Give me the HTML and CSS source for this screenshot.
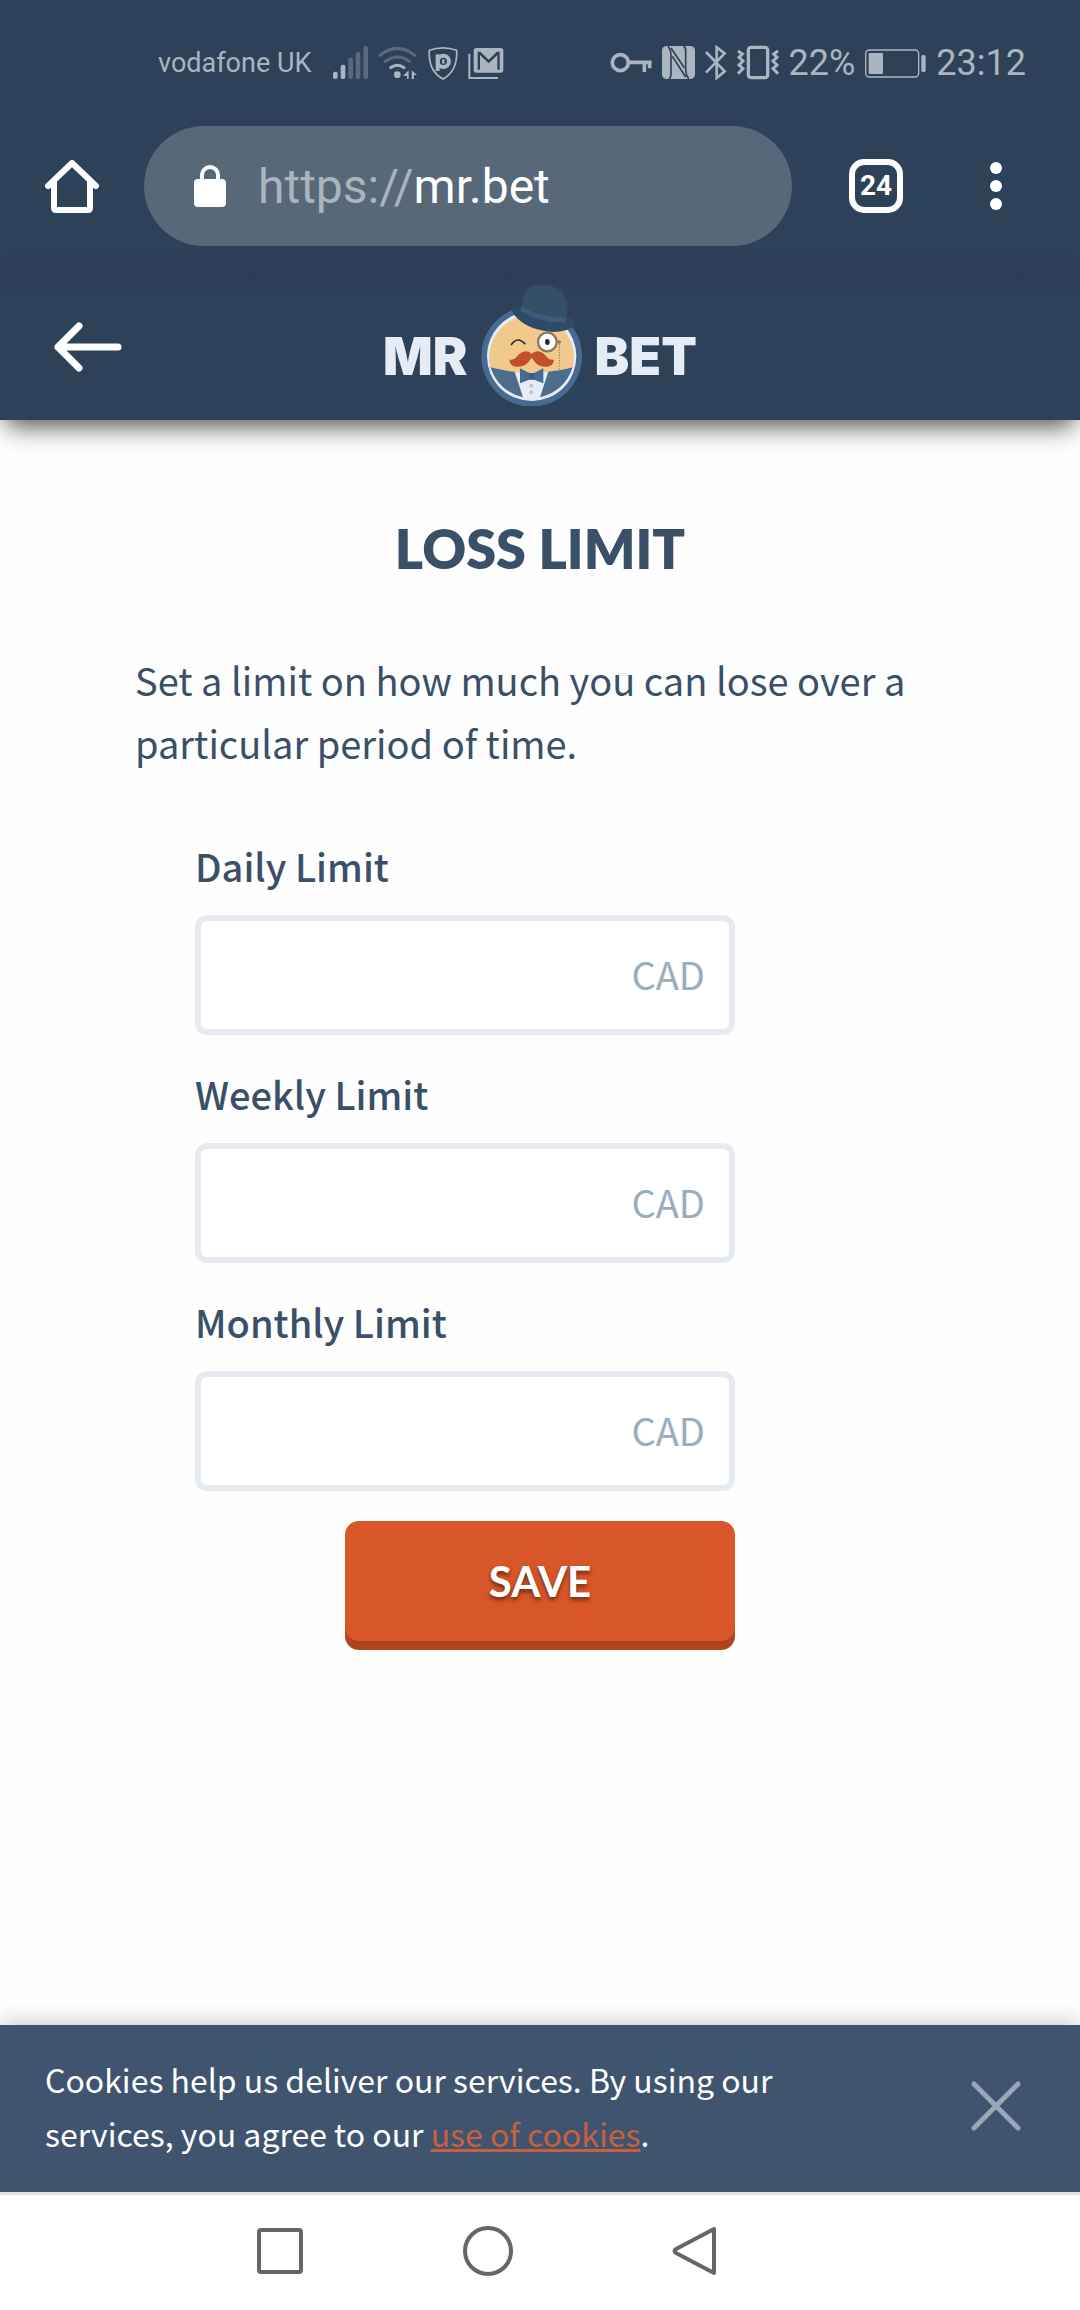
FILE: index.html
```html
<!DOCTYPE html>
<html lang="en">
<head>
<meta charset="utf-8">
<meta name="viewport" content="width=device-width, initial-scale=1">
<title>Loss limit</title>
<link rel="stylesheet" href="styles.css">
</head>
<body>
<div class="browser">
  <div class="status">
    <div class="status-left">
      <span class="carrier">vodafone UK</span>
      <svg width="35" height="36" viewBox="585 42 105 108" fill="currentColor"><rect x="585" y="122" width="14" height="22" rx="6"/><rect x="608" y="101" width="14" height="43" rx="6"/><g opacity=".35"><rect x="631" y="81" width="14" height="63" rx="6"/><rect x="653" y="63" width="14" height="81" rx="6"/><rect x="676" y="45" width="14" height="99" rx="6"/></g></svg>
      <svg width="40" height="36" viewBox="719 42 120 108" fill="none" stroke="currentColor" stroke-width="9" stroke-linecap="round"><g opacity=".35"><path d="M725 73q52-42 104 0M740 92q37-28 74 0"/></g><path d="M757 110q20-15 40 0"/><circle cx="777" cy="131" r="10" fill="currentColor" stroke="none"/><path d="M811 118v26h-5v-9h-12zM820 118l16 14h-9v12h-7z" fill="currentColor" stroke="none"/></svg>
      <svg width="30" height="36" viewBox="871 42 90 108" fill="none" stroke="currentColor" stroke-width="5"><path d="M875 58q41-15 82 0 3 62-41 86-45-24-41-86z"/><path d="M900 70v50" stroke-width="12"/><circle cx="917" cy="91" r="17" stroke-width="12"/><path d="M917 85v13" stroke-width="7"/></svg>
      <svg width="36" height="36" viewBox="998 42 108 108"><path d="M1002 68v73h86" fill="none" stroke="currentColor" stroke-width="6"/><rect x="1015" y="51" width="89" height="74" rx="8" fill="currentColor"/><path d="M1027 62h8l25 24 25-24h8v54h-7V72l-26 25-26-25v44h-7z" fill="#2d4259"/></svg>
    </div>
    <div class="status-right">
      <svg width="42" height="36" viewBox="61 42 126 108" fill="none" stroke="currentColor" stroke-width="11"><circle cx="92" cy="95" r="24"/><path d="M116 94h70M164 94v29M180 94v18"/></svg>
      <svg width="33" height="36" viewBox="222 42 99 108"><rect x="222" y="45" width="99" height="99" rx="14" fill="currentColor"/><path d="M240 45q9 12 9 27v60q0 8-7 12M253 76l40 62M302 144q-9-12-9-27V59q0-9-6-14M289 110L249 51" fill="none" stroke="#2d4259" stroke-width="5"/></svg>
      <svg width="22" height="36" viewBox="356 42 66 108" fill="none" stroke="currentColor" stroke-width="8"><path d="M359 63l56 58-24 20V49l24 18-56 58"/></svg>
      <svg width="42" height="36" viewBox="456 42 126 108" fill="none" stroke="currentColor" stroke-width="9"><rect x="490" y="49" width="58" height="91" rx="8" stroke-width="10"/><path d="M459 60l13 9-10 10 12 11-12 12 12 11-15 15M579 60l-13 9 10 10-12 11 12 12-12 11 15 15"/></svg>
      <span>22%</span>
      <svg width="61" height="36" viewBox="828 42 183 108" fill="none" stroke="currentColor"><rect x="830" y="57" width="159" height="81" rx="11" stroke-width="4"/><rect x="839" y="66" width="43" height="63" rx="4" fill="currentColor" stroke="none"/><rect x="997" y="72" width="13" height="51" rx="5" fill="currentColor" stroke="none"/></svg>
      <span>23:12</span>
    </div>
  </div>
  <div class="toolbar">
    <button class="tool" type="button" aria-label="Home"><svg width="54" height="54" viewBox="0 0 54 54" fill="none" stroke="#fff" stroke-width="6" stroke-linecap="round" stroke-linejoin="round"><path d="M3 27L27 4l24 23M9 23v26q0 2 2 2h32q2 0 2-2V23"/></svg></button>
    <button class="address" type="button">
      <svg width="32" height="42" viewBox="0 0 32 42"><rect y="14" width="32" height="28" rx="4" fill="#fff"/><path d="M8 16V10a8 8 0 0 1 16 0v6" fill="none" stroke="#fff" stroke-width="4"/></svg>
      <span><span class="scheme">https://</span>mr.bet</span>
    </button>
    <button class="tabs" type="button" aria-label="Open tabs">24</button>
    <button class="tool" type="button" aria-label="Menu"><svg width="12" height="48" viewBox="0 0 12 48" fill="#fff"><circle cx="6" cy="6" r="6"/><circle cx="6" cy="24" r="6"/><circle cx="6" cy="42" r="6"/></svg></button>
  </div>
</div>
<header class="site-header">
  <button class="tool back" type="button" aria-label="Back"><svg width="68" height="50" viewBox="0 0 68 50" fill="none" stroke="#fff" stroke-width="7" stroke-linecap="round" stroke-linejoin="round"><path d="M25 4L4 25l21 21M4 25h60"/></svg></button>
  <a class="logo" href="#">
    <span>MR</span>
    <svg width="103" height="122" viewBox="60 40 309 366">
      <circle cx="215" cy="257" r="151" fill="#466a91"/>
      <circle cx="215" cy="257" r="134" fill="#e5ecf5"/>
      <path d="M91 290a127 127 0 1 1 247 0q-60 17-123 17T91 290z" fill="#f1c98d"/>
      <path d="M91 290q45 11 73 13l25 77Q115 362 91 290zM338 290q-45 11-73 13l-25 77q74-18 98-90z" fill="#4c6e8e"/>
      <path d="M180 293l28 14h14l28-14v45l-28-11h-14l-28 11z" fill="#456c91"/>
      <path d="M207 307v19h15v-19z" fill="#3b5f83"/>
      <g fill="#bcc3ce"><circle cx="214" cy="345" r="6"/><circle cx="214" cy="365" r="6"/></g>
      <path d="M153 223q20-29 43-2" fill="none" stroke="#202a34" stroke-width="5"/>
      <circle cx="262" cy="214" r="28" fill="#fff" stroke="#8c795a" stroke-width="7"/>
      <ellipse cx="262" cy="214" rx="7" ry="9" fill="#202a34"/>
      <circle cx="298" cy="214" r="5" fill="#8c795a"/>
      <path d="M298 220v76" stroke="#8c795a" stroke-width="3" stroke-dasharray="4 4"/>
      <path d="M215 250q-10-12-27-6c-18 7-20 27-40 23 2 22 23 25 42 18 13-5 17-14 25-24 8 10 12 19 25 24 19 7 40 4 42-18-20 4-22-16-40-23q-17-6-27 6z" fill="#c24e2a"/>
      <path d="M184 112Q191 44 232 44h30q65 10 61 81l-6 27q-80 4-133-40z" fill="#344f68"/>
      <path d="M153 118q4-14 29-11l3 13q62 38 132 32l3-14q26 8 22 26-15 20-65 20-92-8-124-66z" fill="#2e4b66"/>
      <path d="M187 107q55 38 133 32l-3 15q-75 6-135-33z" fill="#3d5c7d"/>
    </svg>
    <span>BET</span>
  </a>
</header>
<main class="content">
  <h1>LOSS LIMIT</h1>
  <p>Set a limit on how much you can lose over a particular period of time.</p>
  <form class="limits">
    <label for="daily">Daily Limit</label>
    <div class="field"><input id="daily" type="text" inputmode="decimal"><span>CAD</span></div>
    <label for="weekly">Weekly Limit</label>
    <div class="field"><input id="weekly" type="text" inputmode="decimal"><span>CAD</span></div>
    <label for="monthly">Monthly Limit</label>
    <div class="field"><input id="monthly" type="text" inputmode="decimal"><span>CAD</span></div>
    <button class="save" type="button">SAVE</button>
  </form>
</main>
<aside class="cookies">
  <p>Cookies help us deliver our services. By using our services, you agree to our <a href="#">use of cookies</a>.</p>
  <button class="tool" type="button" aria-label="Close"><svg width="50" height="50" viewBox="0 0 50 50" stroke="#9aa8b6" stroke-width="5" stroke-linecap="round"><path d="M3 3l44 44M47 3L3 47"/></svg></button>
</aside>
<nav class="system-nav">
  <button class="tool" type="button" aria-label="Recent apps"><svg width="48" height="50" viewBox="0 0 48 50" fill="none" stroke="#666" stroke-width="4"><rect x="3" y="4" width="42" height="42" rx="2"/></svg></button>
  <button class="tool" type="button" aria-label="Home screen"><svg width="50" height="50" viewBox="0 0 50 50" fill="none" stroke="#666" stroke-width="4"><circle cx="25" cy="25" r="23"/></svg></button>
  <button class="tool" type="button" aria-label="Go back"><svg width="48" height="50" viewBox="0 0 48 50" fill="none" stroke="#666" stroke-width="4" stroke-linejoin="round"><path d="M42 3v44L4 27q-3-2 0-4z"/></svg></button>
</nav>
</body>
</html>
```
FILE: styles.css
```css
* { box-sizing: border-box; }

body {
  margin: 0;
  min-height: 100vh;
  display: flex;
  flex-direction: column;
  background: #fefefe;
  color: #3a5068;
  font-family: "Noto Sans CJK SC", "Noto Sans", sans-serif;
  font-size: 38px;
}

svg { display: block; flex: none; }
button { font: inherit; border: 0; padding: 0; cursor: pointer; }
.tool { background: none; display: block; }

.browser {
  background: #2d4259;
  color: #fff;
  font-family: Roboto, sans-serif;
}

.status {
  display: flex;
  justify-content: space-between;
  padding: 41px 54px 41px 158px;
  color: #abb5bf;
  font-size: 36px;
  line-height: 44px;
}
.status-left, .status-right { display: flex; align-items: center; gap: 10px; }
.carrier { font-size: 27px; margin-right: 12px; }

.toolbar {
  display: flex;
  align-items: center;
  padding: 0 78px 24px 45px;
}
.address {
  flex: 1;
  height: 120px;
  margin: 0 57px 0 45px;
  padding: 0 50px;
  border-radius: 60px;
  display: flex;
  align-items: center;
  gap: 32px;
  background: #576879;
  color: #fff;
  font-size: 48px;
}
.scheme { color: #abb4bd; }
.tabs {
  width: 54px;
  height: 54px;
  margin-right: 87px;
  border: 6px solid #fff;
  border-radius: 15px;
  background: none;
  color: #fff;
  font-size: 28px;
  font-weight: 700;
  line-height: 42px;
}

.site-header {
  display: grid;
  grid-template-columns: 1fr auto 1fr;
  align-items: center;
  height: 150px;
  padding: 0 54px;
  background: linear-gradient(#2c3d54, #2d4259 27px);
  box-shadow: 0 12px 24px -6px rgba(0, 0, 0, .7);
}
.back { padding-top: 4px; }
.logo {
  display: flex;
  align-items: center;
  gap: 12px;
  color: #e5ecf5;
  font-family: Inter, sans-serif;
  font-size: 52px;
  font-weight: 900;
  line-height: 60px;
  text-decoration: none;
}
.logo span { padding-top: 24px; }

.content {
  flex: 1;
  padding: 99px 135px 60px;
}
h1 {
  margin: 0 0 69px;
  font: 800 54px/60px Lato, sans-serif;
  text-align: center;
}
p { margin: 0; }
.content p { line-height: 63px; }

.limits {
  max-width: 600px;
  padding-left: 60px;
  margin-top: 67px;
  display: flex;
  flex-direction: column;
  line-height: 50px;
}
.limits label {
  margin-bottom: 24px;
  font-weight: 500;
}
.field {
  display: flex;
  align-items: center;
  height: 120px;
  padding-right: 24px;
  border: 6px solid #e6ebf1;
  border-radius: 12px;
  background: #fff;
  color: #9bacbf;
}
.field span { padding-bottom: 2px; }
.field + label { margin-top: 34px; }
.field input {
  flex: 1;
  min-width: 0;
  height: 100%;
  padding: 0 24px;
  border: 0;
  outline: 0;
  background: none;
  color: #3a5068;
  font: inherit;
}
.save {
  align-self: flex-end;
  width: 390px;
  height: 120px;
  margin: 30px 0 9px;
  border-radius: 14px;
  background: #d95629;
  box-shadow: 0 9px 0 #b0431e;
  color: #fff;
  font: 700 42px/48px Lato, sans-serif;
  text-shadow: 0 3px 4px rgba(0, 0, 0, .5);
}

.cookies {
  display: flex;
  align-items: center;
  justify-content: space-between;
  gap: 60px;
  padding: 27px 59px 32px 45px;
  background: #3f556f;
  box-shadow: 0 -6px 18px rgba(0, 0, 0, .16);
  color: #fff;
  font-size: 32px;
  line-height: 54px;
}
.cookies p { max-width: 780px; }
.cookies a { color: #c85f3e; }

.system-nav {
  display: flex;
  justify-content: center;
  gap: 159px;
  padding: 31px 104px 34px 0;
  border-top: 3px solid #e0e2e4;
  background: #fff;
}
```
